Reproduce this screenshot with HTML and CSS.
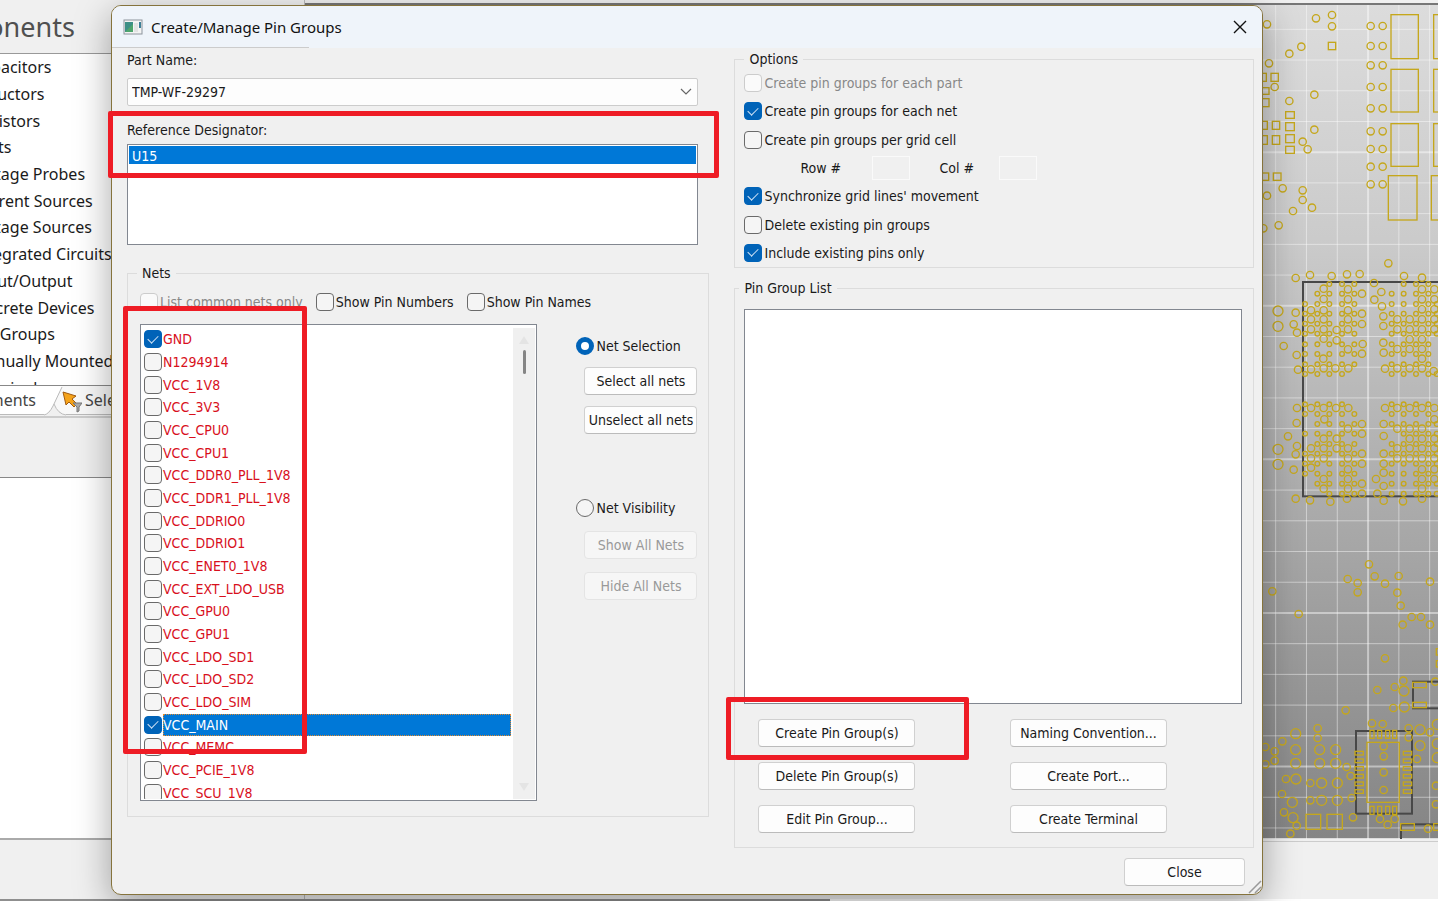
FILE: index.html
```
<!DOCTYPE html>
<html lang="en">
<head>
    <meta charset="UTF-8">
    <meta name="viewport" content="width=device-width, initial-scale=1.0">
    <title>Create/Manage Pin Groups</title>
    <link rel="stylesheet" href="styles.css">
</head>
<body>
    <div class="desktop">
        <aside class="side">
            <h2>Components</h2>
            <div class="tree-pane">
                <ul class="tree">
                    <li>Capacitors</li>
                    <li>Inductors</li>
                    <li>Resistors</li>
                    <li>Ports</li>
                    <li>Voltage Probes</li>
                    <li>Current Sources</li>
                    <li>Voltage Sources</li>
                    <li>Integrated Circuits</li>
                    <li>Input/Output</li>
                    <li>Discrete Devices</li>
                    <li>Pin Groups</li>
                    <li>Manually Mounted</li>
                    <li>Terminals</li>
                </ul>
            </div>
            <div class="tabs">
                <span class="tab">Components</span>
                <svg class="tab-edge" width="22" height="30" viewBox="0 0 22 30">
                    <path d="M0 0H18L9 20Q5 28 0 29Z" fill="#fff"/>
                    <path d="M22 0H18L10 19Q14 28 22 29Z" fill="#f8f8f8"/>
                    <path d="M18 1L9 20Q5 28 0 29M10 18Q14 28 22 29" fill="none" stroke="#bbb"/>
                </svg>
                <div class="tab-next">
                    <svg class="tab-icon" width="20" height="22" viewBox="0 0 20 22">
                        <path d="M1 1L14 5L10 8L15 13L12 16L7 11L4 14Z" fill="#f5a31a" stroke="#a05a10"/>
                        <path d="M11 12H20L17 16V20L15 21V16Z" fill="#aaa" stroke="#777"/>
                    </svg>
                    <span>Selection</span>
                </div>
            </div>
            <div class="props"></div>
            <div class="sheet"></div>
        </aside>
        <main class="layout-view">
            <div class="canvas">
                <svg id="board" class="board" viewBox="0 12 564 2502"></svg>
            </div>
            <div class="status"></div>
        </main>
    </div>

    <div class="dialog" role="dialog" aria-labelledby="dialog-title">
        <header class="titlebar">
            <svg width="20" height="16" viewBox="0 0 20 16">
                <rect x="1" y="1" width="18" height="14" fill="#f4f4f4" stroke="#8d949c"/>
                <rect x="2" y="3" width="8" height="10" fill="#3c8f86"/>
                <path d="M2 13L10 5V13Z" fill="#4fa56c"/>
                <rect x="11" y="4" width="4" height="9" fill="#e3e3e3"/>
                <rect x="16" y="3" width="2" height="6" fill="#3c7f96"/>
            </svg>
            <h1 id="dialog-title">Create/Manage Pin Groups</h1>
            <button class="close-x" aria-label="Close window">
                <svg width="14" height="14" viewBox="0 0 14 14"><path d="M1 1L13 13M13 1L1 13" stroke="#111" stroke-width="1.4"/></svg>
            </button>
        </header>

        <div class="content">
            <section class="left">
                <label for="part">Part Name:</label>
                <div class="combo">
                    <select id="part"><option>TMP-WF-29297</option></select>
                    <svg width="12" height="8" viewBox="0 0 12 8"><path d="M1 1L6 6L11 1" fill="none" stroke="#666" stroke-width="1.2"/></svg>
                </div>
                <label id="refdes-label">Reference Designator:</label>
                <div class="listbox refdes" role="listbox" aria-labelledby="refdes-label">
                    <div class="selected" role="option" aria-selected="true">U15</div>
                </div>

                <fieldset class="group nets">
                    <legend>Nets</legend>
                    <div class="filters">
                        <label class="check off"><input type="checkbox" disabled>List common nets only</label>
                        <label class="check"><input type="checkbox">Show Pin Numbers</label>
                        <label class="check"><input type="checkbox">Show Pin Names</label>
                    </div>
                    <div class="nets-row">
                        <div class="listbox net-list">
                            <div class="net-items">
                                <label class="net"><input type="checkbox" checked><span>GND</span></label>
                                <label class="net"><input type="checkbox"><span>N1294914</span></label>
                                <label class="net"><input type="checkbox"><span>VCC_1V8</span></label>
                                <label class="net"><input type="checkbox"><span>VCC_3V3</span></label>
                                <label class="net"><input type="checkbox"><span>VCC_CPU0</span></label>
                                <label class="net"><input type="checkbox"><span>VCC_CPU1</span></label>
                                <label class="net"><input type="checkbox"><span>VCC_DDR0_PLL_1V8</span></label>
                                <label class="net"><input type="checkbox"><span>VCC_DDR1_PLL_1V8</span></label>
                                <label class="net"><input type="checkbox"><span>VCC_DDRIO0</span></label>
                                <label class="net"><input type="checkbox"><span>VCC_DDRIO1</span></label>
                                <label class="net"><input type="checkbox"><span>VCC_ENET0_1V8</span></label>
                                <label class="net"><input type="checkbox"><span>VCC_EXT_LDO_USB</span></label>
                                <label class="net"><input type="checkbox"><span>VCC_GPU0</span></label>
                                <label class="net"><input type="checkbox"><span>VCC_GPU1</span></label>
                                <label class="net"><input type="checkbox"><span>VCC_LDO_SD1</span></label>
                                <label class="net"><input type="checkbox"><span>VCC_LDO_SD2</span></label>
                                <label class="net"><input type="checkbox"><span>VCC_LDO_SIM</span></label>
                                <label class="net current"><input type="checkbox" checked><span>VCC_MAIN</span></label>
                                <label class="net"><input type="checkbox"><span>VCC_MEMC</span></label>
                                <label class="net"><input type="checkbox"><span>VCC_PCIE_1V8</span></label>
                                <label class="net"><input type="checkbox"><span>VCC_SCU_1V8</span></label>
                            </div>
                            <div class="scrollbar">
                                <svg width="10" height="8" viewBox="0 0 10 8"><path d="M5 0L10 8H0Z" fill="#e4e4e4"/></svg>
                                <div class="thumb"></div>
                                <svg width="10" height="8" viewBox="0 0 10 8"><path d="M5 8L10 0H0Z" fill="#e4e4e4"/></svg>
                            </div>
                        </div>
                        <div class="modes">
                            <div class="mode">
                                <label class="check"><input type="radio" name="mode" checked>Net Selection</label>
                                <button class="btn">Select all nets</button>
                                <button class="btn">Unselect all nets</button>
                            </div>
                            <div class="mode visibility">
                                <label class="check"><input type="radio" name="mode">Net Visibility</label>
                                <button class="btn" disabled>Show All Nets</button>
                                <button class="btn" disabled>Hide All Nets</button>
                            </div>
                        </div>
                    </div>
                </fieldset>
            </section>

            <section class="right">
                <fieldset class="group options">
                    <legend>Options</legend>
                    <div class="option-rows">
                        <label class="check off"><input type="checkbox" disabled>Create pin groups for each part</label>
                        <label class="check"><input type="checkbox" checked>Create pin groups for each net</label>
                        <label class="check"><input type="checkbox">Create pin groups per grid cell</label>
                        <div class="cells">
                            <label for="rows">Row #</label><input id="rows" type="text" disabled>
                            <label for="cols">Col #</label><input id="cols" type="text" disabled>
                        </div>
                        <label class="check"><input type="checkbox" checked>Synchronize grid lines' movement</label>
                        <label class="check"><input type="checkbox">Delete existing pin groups</label>
                        <label class="check"><input type="checkbox" checked>Include existing pins only</label>
                    </div>
                </fieldset>

                <fieldset class="group pin-groups">
                    <legend>Pin Group List</legend>
                    <div class="listbox group-list"></div>
                    <div class="actions">
                        <button class="btn">Create Pin Group(s)</button>
                        <button class="btn">Naming Convention...</button>
                        <button class="btn">Delete Pin Group(s)</button>
                        <button class="btn">Create Port...</button>
                        <button class="btn">Edit Pin Group...</button>
                        <button class="btn">Create Terminal</button>
                    </div>
                </fieldset>
                <button class="btn close">Close</button>
            </section>
        </div>

        <svg class="grip" width="14" height="14" viewBox="0 0 14 14"><path d="M1 13L13 1M7 13L13 7" stroke="#999" stroke-width="1.5"/></svg>
        <div class="mark mark-refdes"></div>
        <div class="mark mark-nets"></div>
        <div class="mark mark-create"></div>
    </div>
    <script src="board.js"></script>
</body>
</html>
```

FILE: styles.css
```
* {
    box-sizing: border-box;
}

body {
    margin: 0;
    background-color: #f0f0f0;
    font-family: "DejaVu Sans Condensed", "Noto Sans", sans-serif;
    font-size: 14px;
    line-height: 20px;
    color: #1a1a1a;
}

/* application behind the dialog */
.desktop {
    display: flex;
    height: 100vh;
    min-height: 901px;
    padding-bottom: 2px;
    overflow: hidden;
    background: linear-gradient(90deg, #8f8f8f 830px, #fff 830px) bottom / 100% 2px no-repeat;
}

.side {
    display: flex;
    flex-direction: column;
    width: 305px;
    border-right: 1px solid #bbb;
    font-family: "Noto Sans", sans-serif;
    font-size: 16px;
    overflow: hidden;
    white-space: nowrap;
}

.side h2 {
    margin: 0 0 0 -88px;
    height: 53px;
    line-height: 54px;
    font-size: 27px;
    font-weight: 400;
    color: #505050;
}

.tree-pane {
    height: 333px;
    background: #fff;
    border-top: 1px solid #999;
    border-bottom: 1px solid #888;
    overflow: hidden;
}

/* scrolled sideways, the start of every label is out of view */
.tree {
    display: grid;
    grid-auto-rows: 1fr;
    align-items: center;
    height: 347px;
    margin: 0 0 0 -28px;
    padding: 0;
    list-style: none;
}

.tabs {
    display: flex;
    height: 32px;
    border-bottom: 2px solid #ccc;
    line-height: 28px;
    color: #444;
}

.tab {
    display: flex;
    justify-content: flex-end;
    width: 44px;
    height: 29px;
    padding-right: 8px;
    background: #fff;
    border-bottom: 1px solid #bbb;
    overflow: hidden;
}

.tab-next {
    display: flex;
    flex: 1;
    gap: 3px;
    height: 29px;
    background: #f8f8f8;
    border-bottom: 1px solid #bbb;
}

.tab-icon {
    margin: 5px 0 0 -4px;
}

.props {
    height: 60px;
    border-bottom: 1px solid #888;
}

.sheet {
    height: 362px;
    background: #fff;
    border-bottom: 2px solid #aaa;
}

.layout-view {
    display: flex;
    flex-direction: column;
    flex: 1;
    padding-top: 3px;
}

.canvas {
    display: flex;
    justify-content: flex-end;
    height: 836px;
    border-top: 2px solid #777;
    border-bottom: 1px solid #ddd;
    background: linear-gradient(#dcdcdc, #cbcbcb 28%, #ababab 60%, #858585);
}

.board {
    width: 188px;
    height: 834px;
}

.status {
    margin-top: 2px;
    border-top: 1px solid #ccc;
}

/* dialog */
.dialog {
    position: absolute;
    top: 5px;
    left: 111px;
    right: 175px;
    background: #f0f0f0;
    border: 1px solid #85733c;
    border-radius: 10px;
    box-shadow: 0 10px 36px rgba(0, 0, 0, 0.35);
}

.titlebar {
    display: flex;
    align-items: center;
    gap: 8px;
    height: 42px;
    padding: 0 15px 1px 11px;
    background: linear-gradient(#ccc, #ccc) 0 100% / 197px 1px no-repeat, #eff4fa;
    border-radius: 9px 9px 0 0;
}

.titlebar h1 {
    flex: 1;
    margin: 0;
    font-family: "Noto Sans", sans-serif;
    font-size: 15px;
    font-weight: 400;
    color: #111;
}

.close-x {
    display: flex;
    padding: 0;
    border: 0;
    background: none;
}

.content {
    display: flex;
    gap: 25px;
    padding: 1px 8px 8px 15px;
}

.left {
    flex: 583;
    display: flex;
    flex-direction: column;
    padding-top: 1px;
}

.right {
    flex: 520;
    display: flex;
    flex-direction: column;
    min-width: 0;
}

.combo {
    display: flex;
    align-items: center;
    margin: 8px 11px 14px 0;
    height: 28px;
    background: #fdfdfd;
    border: 1px solid #ccc;
    border-radius: 2px;
}

.combo select {
    flex: 1;
    appearance: none;
    border: 0;
    padding: 0 4px;
    background: none;
    font: inherit;
    color: inherit;
}

.combo svg {
    margin-right: 5px;
}

.listbox {
    background: #fff;
    border: 1px solid #828790;
}

.refdes {
    height: 101px;
    margin: 4px 11px 18px 0;
    padding: 1px;
}

.selected {
    height: 18px;
    line-height: 20px;
    padding-left: 3px;
    background: #0078d7;
    color: #fff;
}

.group {
    margin: 0;
    padding: 0;
    min-width: 0;
    border: 1px solid #dcdcdc;
}

.group legend {
    margin-left: 9px;
    padding: 0 5px;
    height: 20px;
}

.check {
    display: flex;
    align-items: center;
    gap: 2px;
    white-space: nowrap;
}

.off {
    color: #888;
}

input[type="checkbox"],
input[type="radio"] {
    appearance: none;
    flex: none;
    display: flex;
    align-items: center;
    justify-content: center;
    width: 18px;
    height: 18px;
    margin: 0;
    border: 1px solid #6a6a6a;
    border-radius: 4px;
    background: #f5f5f5;
}

input[type="checkbox"]:checked {
    background: #0063b8;
    border-color: #0063b8;
}

input[type="checkbox"]:checked::before {
    content: "";
    width: 9px;
    height: 5px;
    margin-bottom: 3px;
    border: solid #cfe2f5;
    border-width: 0 0 1px 1px;
    transform: rotate(-45deg);
}

input[type="checkbox"]:disabled {
    border-color: #ccc;
    background: #fafafa;
}

input[type="radio"] {
    border-radius: 50%;
}

input[type="radio"]:checked {
    border: 5px solid #0063b8;
    background: #fff;
}

.filters {
    display: flex;
    gap: 13px;
    padding: 9px 12px 12px;
}

.nets-row {
    display: flex;
    gap: 39px;
    padding: 0 11px 15px 12px;
}

.net-list {
    flex: 1;
    display: flex;
    height: 477px;
    padding: 3px 1px 1px 3px;
}

/* 21 rows, the last one is cut by the frame */
.net-items {
    flex: 1;
    display: grid;
    grid-auto-rows: 1fr;
    height: 476px;
    overflow: hidden;
    clip-path: inset(0 0 5px 0);
}

.net {
    display: flex;
    align-items: center;
    gap: 1px;
    color: #d8101c;
}

.net span {
    flex: 1;
    line-height: 22px;
}

.current span {
    background: #0078d7;
    color: #fff;
    outline: 1px dotted #e08a30;
    outline-offset: -1px;
}

.scrollbar {
    display: flex;
    flex-direction: column;
    align-items: center;
    width: 22px;
    margin-left: 2px;
    padding: 8px 0;
    background: #f0f0f0;
}

.scrollbar .thumb {
    width: 3px;
    height: 24px;
    margin: 6px 0 auto;
    border-radius: 2px;
    background: #858585;
}

.modes {
    width: 121px;
    padding-top: 12px;
}

.mode {
    display: flex;
    flex-direction: column;
    gap: 11px;
}

.mode .btn {
    margin-left: 8px;
}

.visibility {
    margin-top: 64px;
    gap: 13px;
}

.btn {
    height: 28px;
    padding: 0;
    border: 1px solid #d0d0d0;
    border-bottom-color: #bbb;
    border-radius: 4px;
    background: #fdfdfd;
    font: inherit;
    color: #1a1a1a;
    white-space: nowrap;
}

.btn:disabled {
    border-color: #e4e4e4;
    background: #f6f6f6;
    color: #999;
}

.option-rows {
    display: grid;
    grid-auto-rows: 1fr;
    height: 198px;
    padding-left: 9px;
}

.cells {
    display: flex;
    align-items: center;
    padding-left: 56px;
}

.cells label {
    width: 72px;
}

.cells input {
    width: 38px;
    height: 24px;
    margin-right: 29px;
    border: 1px solid #fafafa;
    background: #f0f0f0;
}

.cells input + label {
    width: 60px;
}

.pin-groups {
    margin-top: 10px;
}

.pin-groups legend {
    margin-left: 4px;
}

.group-list {
    height: 395px;
    margin: 11px 11px 0 9px;
}

.actions {
    display: grid;
    grid-template-columns: 157px 157px;
    justify-content: space-between;
    gap: 15px;
    padding: 15px 86px 14px 23px;
}

.close {
    align-self: flex-end;
    width: 121px;
    margin: 10px 9px 0 0;
}

.grip {
    position: absolute;
    right: 0;
    bottom: 0;
}

/* highlight boxes */
.mark {
    position: absolute;
    border: 5px solid #ee1c25;
    border-radius: 2px;
    pointer-events: none;
}

.mark-refdes {
    left: -4px;
    top: 105px;
    width: 611px;
    height: 67px;
}

.mark-nets {
    left: 11px;
    top: 300px;
    width: 184px;
    height: 448px;
}

.mark-create {
    left: 614px;
    top: 691px;
    width: 243px;
    height: 63px;
}
```

FILE: board.js
```
const board = document.getElementById('board');
const NS = 'http://www.w3.org/2000/svg';

function add(name, attrs) {
    const el = document.createElementNS(NS, name);
    for (const key in attrs) el.setAttribute(key, attrs[key]);
    board.appendChild(el);
}

function circles(dx, dy, r, list) {
    list.forEach(([x, y]) => add('circle', { cx: x + dx, cy: y + dy, r: r, fill: 'none', stroke: '#c5a71c', 'stroke-width': 4 }));
}

function rects(dx, dy, list, color, w) {
    list.forEach(([x, y, width, height]) => add('rect', { x: x + dx, y: y + dy, width, height, fill: 'none', stroke: color || '#c5a71c', 'stroke-width': w || 4 }));
}

// grid, every fifth line is heavier
for (let i = 0; i < 6; i++) {
    add('path', { d: `M${77 + i * 92.4} 0V2520`, stroke: '#fff', 'stroke-opacity': 0.45, 'stroke-width': i === 3 ? 6 : 3 });
}
for (let i = 0; i < 27; i++) {
    add('path', { d: `M0 ${85 + i * 92.15}H564`, stroke: '#fff', 'stroke-opacity': 0.45, 'stroke-width': i % 5 === 4 ? 6 : 3 });
}

// outlines
rects(0, 750, [[159, 93, 500, 643]], '#484848', 6);
rects(0, 1500, [[318, 690, 168, 248], [489, 542, 120, 80], [453, 970, 200, 90]], '#484848', 6);

// top area
circles(-210, 0, 11, [
    [261, 70], [408, 52], [456, 42], [456, 76], [364, 137], [328, 158], [267, 187], [284, 258], [328, 300],
    [403, 281], [403, 386], [368, 422], [383, 445], [308, 562], [261, 584], [368, 568], [368, 597], [396, 620],
    [339, 630], [296, 673], [250, 682],
    [572, 75], [608, 75], [572, 135], [608, 135], [572, 193], [608, 193], [572, 258], [608, 258], [572, 322],
    [608, 322], [572, 391], [608, 391], [572, 444], [608, 444], [572, 497], [608, 497], [572, 550], [608, 550]
]);
rects(-210, 0, [
    [445, 124, 22, 22], [237, 217, 22, 24], [273, 217, 22, 24], [245, 260, 22, 20], [245, 293, 22, 24],
    [317, 332, 26, 20], [317, 365, 26, 24], [317, 401, 26, 24], [317, 436, 26, 21],
    [240, 361, 22, 24], [277, 361, 22, 24], [240, 404, 22, 26], [277, 404, 22, 26], [243, 516, 23, 22], [280, 516, 23, 22],
    [633, 41, 82, 132], [633, 205, 82, 128], [633, 368, 82, 128], [625, 524, 86, 133],
    [761, 41, 82, 132], [761, 205, 82, 128], [761, 368, 82, 128], [754, 524, 86, 133]
]);

// BGA balls
const ballRows = {
    99: '0011101110', 128: '0111111110', 159: '1111111111', 188: '1111111111', 218: '1111111111',
    248: '1111111111', 280: '1111111110', 309: '1111111110', 340: '1111111110', 369: '1111011111',
    460: '1111011110', 489: '1111111110', 519: '0111111111', 548: '1111101111', 579: '0111111111',
    608: '1111111111', 638: '1111111111', 668: '1111111110', 698: '0111111111', 728: '0011111111'
};
const ballCols = [165, 202, 238, 276, 313, 425, 461, 498, 535, 560];
for (const y in ballRows) {
    circles(0, 750, 7, ballCols.filter((x, i) => ballRows[y][i] === '1').map(x => [x, Number(y)]));
}
circles(0, 750, 15, [[84, 180], [84, 226], [84, 595], [84, 640]]);
circles(0, 750, 11, [
    [137, 81], [180, 72], [245, 75], [291, 70], [329, 69], [462, 75], [516, 80], [415, 37], [372, 96], [394, 123],
    [373, 146], [396, 166], [400, 196], [400, 225], [400, 275], [401, 305], [405, 353], [137, 185], [131, 220],
    [141, 245], [101, 285], [140, 312], [144, 356], [336, 128], [336, 188], [336, 219], [338, 279], [336, 308],
    [295, 352], [256, 352], [183, 355], [221, 352], [220, 323], [294, 295], [260, 237], [260, 268], [221, 263],
    [183, 178], [183, 205], [183, 235], [221, 113], [221, 144], [221, 178], [221, 205], [221, 235],
    [294, 115], [294, 145], [294, 178], [294, 205], [294, 235],
    [516, 115], [516, 145], [516, 175], [516, 205], [516, 235], [516, 265], [516, 294], [516, 323], [516, 352],
    [553, 115], [553, 145], [553, 175], [553, 205], [553, 235], [479, 205], [479, 235], [479, 265], [479, 294],
    [479, 352], [442, 205], [442, 235], [442, 294], [442, 352], [551, 360],
    [141, 471], [140, 516], [114, 556], [141, 585], [137, 610], [131, 656], [137, 743], [180, 748], [241, 752],
    [291, 743], [401, 749], [459, 751], [516, 743], [336, 519], [336, 548], [336, 608], [336, 638], [336, 698],
    [336, 728], [183, 471], [221, 471], [258, 471], [295, 471], [223, 505], [294, 533], [260, 563], [260, 592],
    [183, 592], [183, 622], [183, 650], [221, 563], [221, 592], [221, 622], [221, 684], [221, 713],
    [294, 592], [294, 622], [294, 655], [294, 684], [294, 713], [401, 519], [401, 555], [401, 608], [401, 638],
    [401, 665], [378, 684], [401, 705], [382, 728], [405, 471], [442, 471], [479, 471], [516, 471], [553, 471],
    [553, 505], [442, 533], [479, 533], [516, 533], [442, 592], [442, 622], [479, 563], [479, 592], [479, 622],
    [516, 563], [516, 592], [516, 622], [516, 655], [516, 684], [516, 713], [553, 563], [553, 592], [553, 622],
    [553, 655], [553, 684]
]);

// lower area
circles(0, 1500, 11, [
    [357, 190], [293, 234], [323, 246], [323, 274], [374, 226], [405, 248], [446, 225], [442, 275], [452, 314],
    [540, 242], [485, 348], [513, 348], [458, 371], [540, 371], [67, 271], [146, 339], [405, 472], [382, 567],
    [434, 558], [460, 539], [287, 628], [430, 621], [203, 682], [203, 711], [97, 721], [46, 738], [74, 751],
    [74, 779], [46, 790], [290, 798], [302, 825], [108, 834], [181, 846], [181, 898], [96, 879], [305, 891],
    [102, 934], [309, 949], [140, 974], [121, 998], [366, 667], [398, 669], [476, 682], [476, 709], [540, 694],
    [501, 774], [401, 736], [401, 766], [401, 814], [401, 867], [390, 954], [434, 954], [413, 971], [534, 983],
    [558, 854], [558, 910], [556, 542]
]);
circles(0, 1500, 15, [
    [137, 698], [137, 746], [137, 787], [138, 834], [209, 746], [209, 787], [257, 746], [257, 787], [215, 846],
    [262, 846], [215, 898], [262, 898], [127, 904], [129, 950], [510, 686], [510, 734], [462, 570], [463, 618],
    [562, 670], [562, 728], [562, 770]
]);
rects(0, 1500, [
    [168, 940, 44, 45], [231, 940, 46, 45], [351, 724, 97, 180], [488, 544, 41, 16], [488, 604, 41, 16],
    [452, 968, 41, 20], [551, 968, 40, 20], [559, 443, 20, 19], [559, 479, 20, 19]
]);
for (let i = 0; i < 6; i++) {
    const y = 751 + i * 23;
    rects(0, 1500, [[315, y, 25, 11], [460, y, 25, 11]]);
}
[360, 383, 407, 428].forEach(x => rects(0, 1500, [[x, 688, 12, 24], [x, 916, 12, 24]]));
```
